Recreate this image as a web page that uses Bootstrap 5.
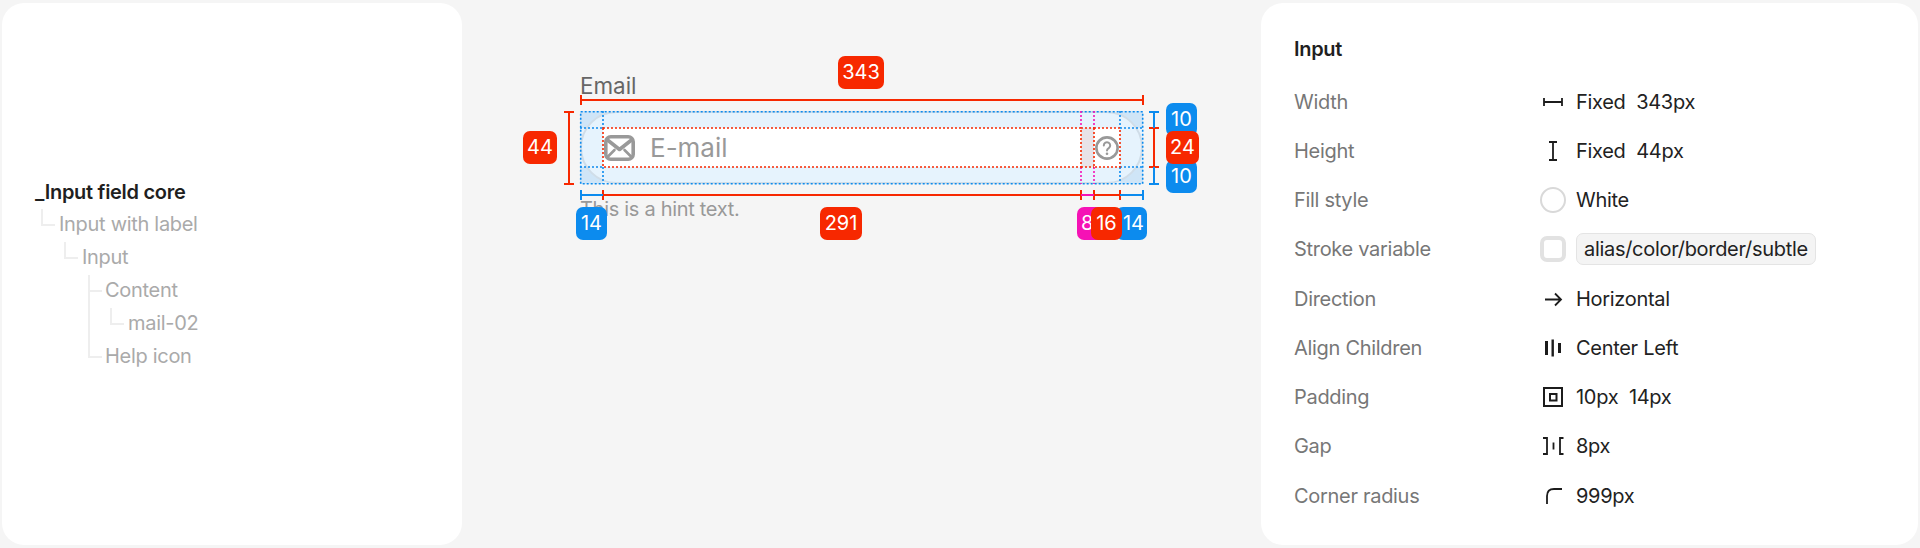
<!DOCTYPE html>
<html lang="en">
<head>
  <meta charset="UTF-8">
  <meta name="viewport" content="width=device-width, initial-scale=1.0">
  <title>Input field core</title>
  <link rel="stylesheet" href="https://cdn.jsdelivr.net/npm/bootstrap@5.3.0/dist/css/bootstrap.min.css">
  <style>
    body {
      background-color: #f5f5f5;
      font-family: Inter, "Liberation Sans", sans-serif;
      font-size: 20px;
      letter-spacing: -0.3px;
      overflow: hidden;
    }

    .page-wrap {
      width: 1920px;
      height: 548px;
      padding: 3px 2px 3px 2px;
    }

    .side-card {
      background-color: #fff;
      border-radius: 22px;
    }

    /* layer tree */
    .tree-card {
      width: 460px;
      padding-left: 33px;
    }

    .tree-node {
      position: relative;
      height: 33px;
      line-height: 33px;
      color: #aaa;
    }

    .tree-node.tree-root {
      color: #1f1f1f;
      font-weight: 600;
      line-height: 34px;
    }

    .tree-node:not(.tree-root)::before {
      content: "";
      position: absolute;
      top: 1px;
      height: 17px;
      width: 14px;
      border-left: 2px solid #eee;
      border-bottom: 2px solid #eee;
    }

    .lvl-1 { padding-left: 24px; }
    .lvl-2 { padding-left: 47px; }
    .lvl-3 { padding-left: 70px; }
    .lvl-4 { padding-left: 93px; }
    .lvl-1::before { left: 6px; }
    .lvl-2::before { left: 29px; }
    .lvl-3::before { left: 53px; }
    .lvl-4::before { left: 75px; }

    .tree-node.tree-tall::before {
      top: -65px;
      height: 83px;
    }

    /* middle canvas */
    .spec-canvas {
      position: relative;
      width: 799px;
      padding: 69px 0 0 118px;
    }

    .spec-overlay {
      position: absolute;
      top: -3px;
      left: 0;
      width: 799px;
      height: 548px;
    }

    .spec-box {
      width: 563px;
    }

    .spec-label {
      font-size: 22.4px;
      letter-spacing: 0;
      line-height: 27px;
      height: 39px;
      color: #666;
    }

    .spec-hint {
      margin-top: 13px;
      line-height: 24px;
      color: #999;
    }

    .spec-frame {
      height: 73px;
      background:
        linear-gradient(#cfe5f7, #cfe5f7) left top / 23px 17px no-repeat,
        linear-gradient(#cfe5f7, #cfe5f7) left bottom / 23px 17px no-repeat,
        linear-gradient(#cfe5f7, #cfe5f7) right top / 23px 17px no-repeat,
        linear-gradient(#cfe5f7, #cfe5f7) right bottom / 23px 17px no-repeat,
        #e6f3fd;
    }

    .spec-field {
      height: 73px;
      padding: 17px 23px;
      background-color: #e6f3fd;
      border: 2px solid #d0dde8;
    }

    .spec-inner {
      margin: -2px;
      height: 39px;
      flex: 1 1 auto;
    }

    .spec-content {
      flex: 1 1 auto;
      background-color: #fff;
      gap: 15px;
      padding-left: 1px;
      font-size: 26px;
      letter-spacing: 0;
      color: #999;
    }

    .spec-gap {
      width: 13px;
      flex: none;
      background-color: #e8e3e8;
    }

    .spec-help {
      width: 26px;
      flex: none;
      background-color: #fff;
    }

    /* dimension tags */
    .dim-tag {
      position: absolute;
      height: 33px;
      line-height: 33px;
      border-radius: 7px;
      text-align: center;
      font-size: 20px;
      letter-spacing: 0;
      color: #fff;
    }

    .tag-red { background-color: #f72800; }
    .tag-blue { background-color: #0c8bee; }
    .tag-pink { background-color: #f512b5; }

    .tag-343 { left: 376px; top: 53px; width: 46px; }
    .tag-44 { left: 61px; top: 128px; width: 34px; }
    .tag-10a { left: 704px; top: 100px; width: 31px; }
    .tag-10b { left: 704px; top: 157px; width: 31px; }
    .tag-24 { left: 704px; top: 128px; width: 33px; }
    .tag-14a { left: 114px; top: 204px; width: 31px; }
    .tag-291 { left: 358px; top: 204px; width: 42px; }
    .tag-8 { left: 615px; top: 204px; width: 30px; text-align: left; padding-left: 4px; }
    .tag-14b { left: 654px; top: 204px; width: 31px; text-align: right; padding-right: 3px; }
    .tag-16 { left: 629px; top: 204px; width: 31px; }

    /* properties panel */
    .prop-card {
      width: 657px;
      padding: 24px 0 0 33px;
    }

    .prop-title {
      height: 50px;
      line-height: 44px;
      font-weight: 600;
      color: #1f1f1f;
    }

    .prop-row {
      height: 49.25px;
    }

    .prop-name {
      width: 246px;
      color: #777;
    }

    .prop-icon {
      width: 26px;
      height: 26px;
      flex: none;
      margin-right: 10px;
      display: block;
    }

    .prop-value {
      color: #222;
      white-space: pre;
    }

    .prop-swatch {
      width: 26px;
      height: 26px;
      flex: none;
      margin-right: 10px;
      background-color: #fff;
    }

    .swatch-round {
      border: 2px solid #d9d9d9;
      border-radius: 50%;
    }

    .swatch-square {
      border: 4px solid #e2e2e2;
      border-radius: 7px;
    }

    .prop-token {
      background-color: #f4f4f4;
      border: 1px solid #e4e4e4;
      border-radius: 7px;
      height: 32px;
      line-height: 30px;
      padding: 0 7px;
    }
  </style>
</head>
<body>
  <div class="page-wrap d-flex">

    <!-- Layer tree -->
    <div class="side-card tree-card d-flex flex-column justify-content-center">
      <div class="tree-node tree-root">_Input field core</div>
      <div class="tree-node lvl-1">Input with label</div>
      <div class="tree-node lvl-2">Input</div>
      <div class="tree-node lvl-3">Content</div>
      <div class="tree-node lvl-4">mail-02</div>
      <div class="tree-node lvl-3 tree-tall">Help icon</div>
    </div>

    <!-- Redline canvas -->
    <div class="spec-canvas">
      <div class="spec-box">
        <div class="spec-label">Email</div>
        <div class="spec-frame">
          <div class="spec-field rounded-pill d-flex">
            <div class="spec-inner d-flex">
              <div class="spec-content d-flex align-items-center">
                <svg width="31" height="26" viewBox="0 0 31 26" fill="none" stroke="#999" stroke-width="3.6" stroke-linejoin="round" stroke-linecap="round">
                  <rect x="1.8" y="1.8" width="27.4" height="22.4" rx="5"/>
                  <path d="M3.5 5l12 9.5L27.5 5"/>
                  <path d="M3.5 22l7-7M27.5 22l-7-7" stroke-width="2.6"/>
                </svg>
                <span>E-mail</span>
              </div>
              <div class="spec-gap"></div>
              <div class="spec-help d-flex align-items-center justify-content-center">
                <svg width="24" height="24" viewBox="0 0 24 24" fill="none" stroke="#999">
                  <circle cx="12" cy="12" r="10.6" stroke-width="2.6"/>
                  <path d="M8.8 9.4a3.2 3.2 0 1 1 5 2.7c-1.2.8-1.8 1.3-1.8 2.5" stroke-width="2" stroke-linecap="round"/>
                  <circle cx="12" cy="17.8" r="1.3" fill="#999" stroke="none"/>
                </svg>
              </div>
            </div>
          </div>
        </div>
        <div class="spec-hint">This is a hint text.</div>
      </div>

      <svg class="spec-overlay" viewBox="462 0 799 548" fill="none">
        <!-- dotted layout boxes -->
        <g stroke="#0c8bee" stroke-width="1.6" stroke-dasharray="2 2">
          <rect x="580.7" y="111.7" width="562" height="72"/>
          <path d="M603 111V128M603 167V184M1120 111V128M1120 167V184M580 128H603M580 167H603M1120 128H1143M1120 167H1143"/>
        </g>
        <g stroke="#f512b5" stroke-width="1.6" stroke-dasharray="2 2">
          <path d="M1081 111V128M1081 167V184M1094 111V128M1094 167V184"/>
        </g>
        <g stroke="#f72800" stroke-width="1.6" stroke-dasharray="2 2">
          <rect x="603" y="128" width="478" height="39"/>
          <path d="M1081 128H1094M1081 167H1094"/>
          <rect x="1094" y="128" width="26" height="39"/>
        </g>
        <!-- dimension lines -->
        <g stroke="#f72800" stroke-width="2">
          <path d="M581 100H1143M581 95V105M1143 95V105"/>
          <path d="M569 112V184M564 112H574M564 184H574"/>
          <path d="M1154 128V167M1149 128H1159M1149 167H1159"/>
          <path d="M603 195H1081M1094 195H1120M603 190V200M1081 190V200M1094 190V200M1120 190V200"/>
        </g>
        <g stroke="#0c8bee" stroke-width="2">
          <path d="M581 195H603M581 190V200M1120 195H1143M1143 190V200"/>
          <path d="M1154 112V128M1149 112H1159M1154 167V184M1149 184H1159"/>
        </g>
        <path d="M1081 195H1094" stroke="#f512b5" stroke-width="2"/>
      </svg>

      <div class="dim-tag tag-red tag-343">343</div>
      <div class="dim-tag tag-red tag-44">44</div>
      <div class="dim-tag tag-blue tag-10a">10</div>
      <div class="dim-tag tag-blue tag-10b">10</div>
      <div class="dim-tag tag-red tag-24">24</div>
      <div class="dim-tag tag-blue tag-14a">14</div>
      <div class="dim-tag tag-red tag-291">291</div>
      <div class="dim-tag tag-pink tag-8">8</div>
      <div class="dim-tag tag-blue tag-14b">14</div>
      <div class="dim-tag tag-red tag-16">16</div>
    </div>

    <!-- Properties -->
    <div class="side-card prop-card">
      <div class="prop-title">Input</div>

      <div class="prop-row d-flex align-items-center">
        <div class="prop-name">Width</div>
        <svg class="prop-icon" viewBox="0 0 26 26" fill="none" stroke="#1c1c1c" stroke-width="1.8"><path d="M4 13H22M4 9V17M22 9V17"/></svg>
        <div class="prop-value">Fixed  343px</div>
      </div>
      <div class="prop-row d-flex align-items-center">
        <div class="prop-name">Height</div>
        <svg class="prop-icon" viewBox="0 0 26 26" fill="none" stroke="#1c1c1c" stroke-width="1.8"><path d="M13 4V22M9 4H17M9 22H17"/></svg>
        <div class="prop-value">Fixed  44px</div>
      </div>
      <div class="prop-row d-flex align-items-center">
        <div class="prop-name">Fill style</div>
        <div class="prop-swatch swatch-round"></div>
        <div class="prop-value">White</div>
      </div>
      <div class="prop-row d-flex align-items-center">
        <div class="prop-name">Stroke variable</div>
        <div class="prop-swatch swatch-square"></div>
        <div class="prop-value prop-token">alias/color/border/subtle</div>
      </div>
      <div class="prop-row d-flex align-items-center">
        <div class="prop-name">Direction</div>
        <svg class="prop-icon" viewBox="0 0 26 26" fill="none" stroke="#1c1c1c" stroke-width="1.8"><path d="M5 13.5H21M15 7.5L21 13.5L15 19.5"/></svg>
        <div class="prop-value">Horizontal</div>
      </div>
      <div class="prop-row d-flex align-items-center">
        <div class="prop-name">Align Children</div>
        <svg class="prop-icon" viewBox="0 0 26 26" fill="#1c1c1c"><rect x="5" y="6" width="3" height="14"/><rect x="11.5" y="4.5" width="2.4" height="17"/><rect x="18" y="8" width="3" height="10"/></svg>
        <div class="prop-value">Center Left</div>
      </div>
      <div class="prop-row d-flex align-items-center">
        <div class="prop-name">Padding</div>
        <svg class="prop-icon" viewBox="0 0 26 26" fill="none" stroke="#1c1c1c" stroke-width="2"><rect x="4" y="4" width="18" height="18"/><rect x="10" y="10" width="6.5" height="6.5"/></svg>
        <div class="prop-value">10px  14px</div>
      </div>
      <div class="prop-row d-flex align-items-center">
        <div class="prop-name">Gap</div>
        <svg class="prop-icon" viewBox="0 0 26 26" fill="none" stroke="#1c1c1c" stroke-width="1.8"><path d="M3 5H7V21H3M23.5 5H20V21H23.5M13.5 9.5V16.5"/></svg>
        <div class="prop-value">8px</div>
      </div>
      <div class="prop-row d-flex align-items-center">
        <div class="prop-name">Corner radius</div>
        <svg class="prop-icon" viewBox="0 0 26 26" fill="none" stroke="#1c1c1c" stroke-width="1.8"><path d="M7 21V13Q7 6 14 6H22"/></svg>
        <div class="prop-value">999px</div>
      </div>
    </div>
  </div>

  <script src="https://cdn.jsdelivr.net/npm/bootstrap@5.3.0/dist/js/bootstrap.bundle.min.js"></script>
</body>
</html>
